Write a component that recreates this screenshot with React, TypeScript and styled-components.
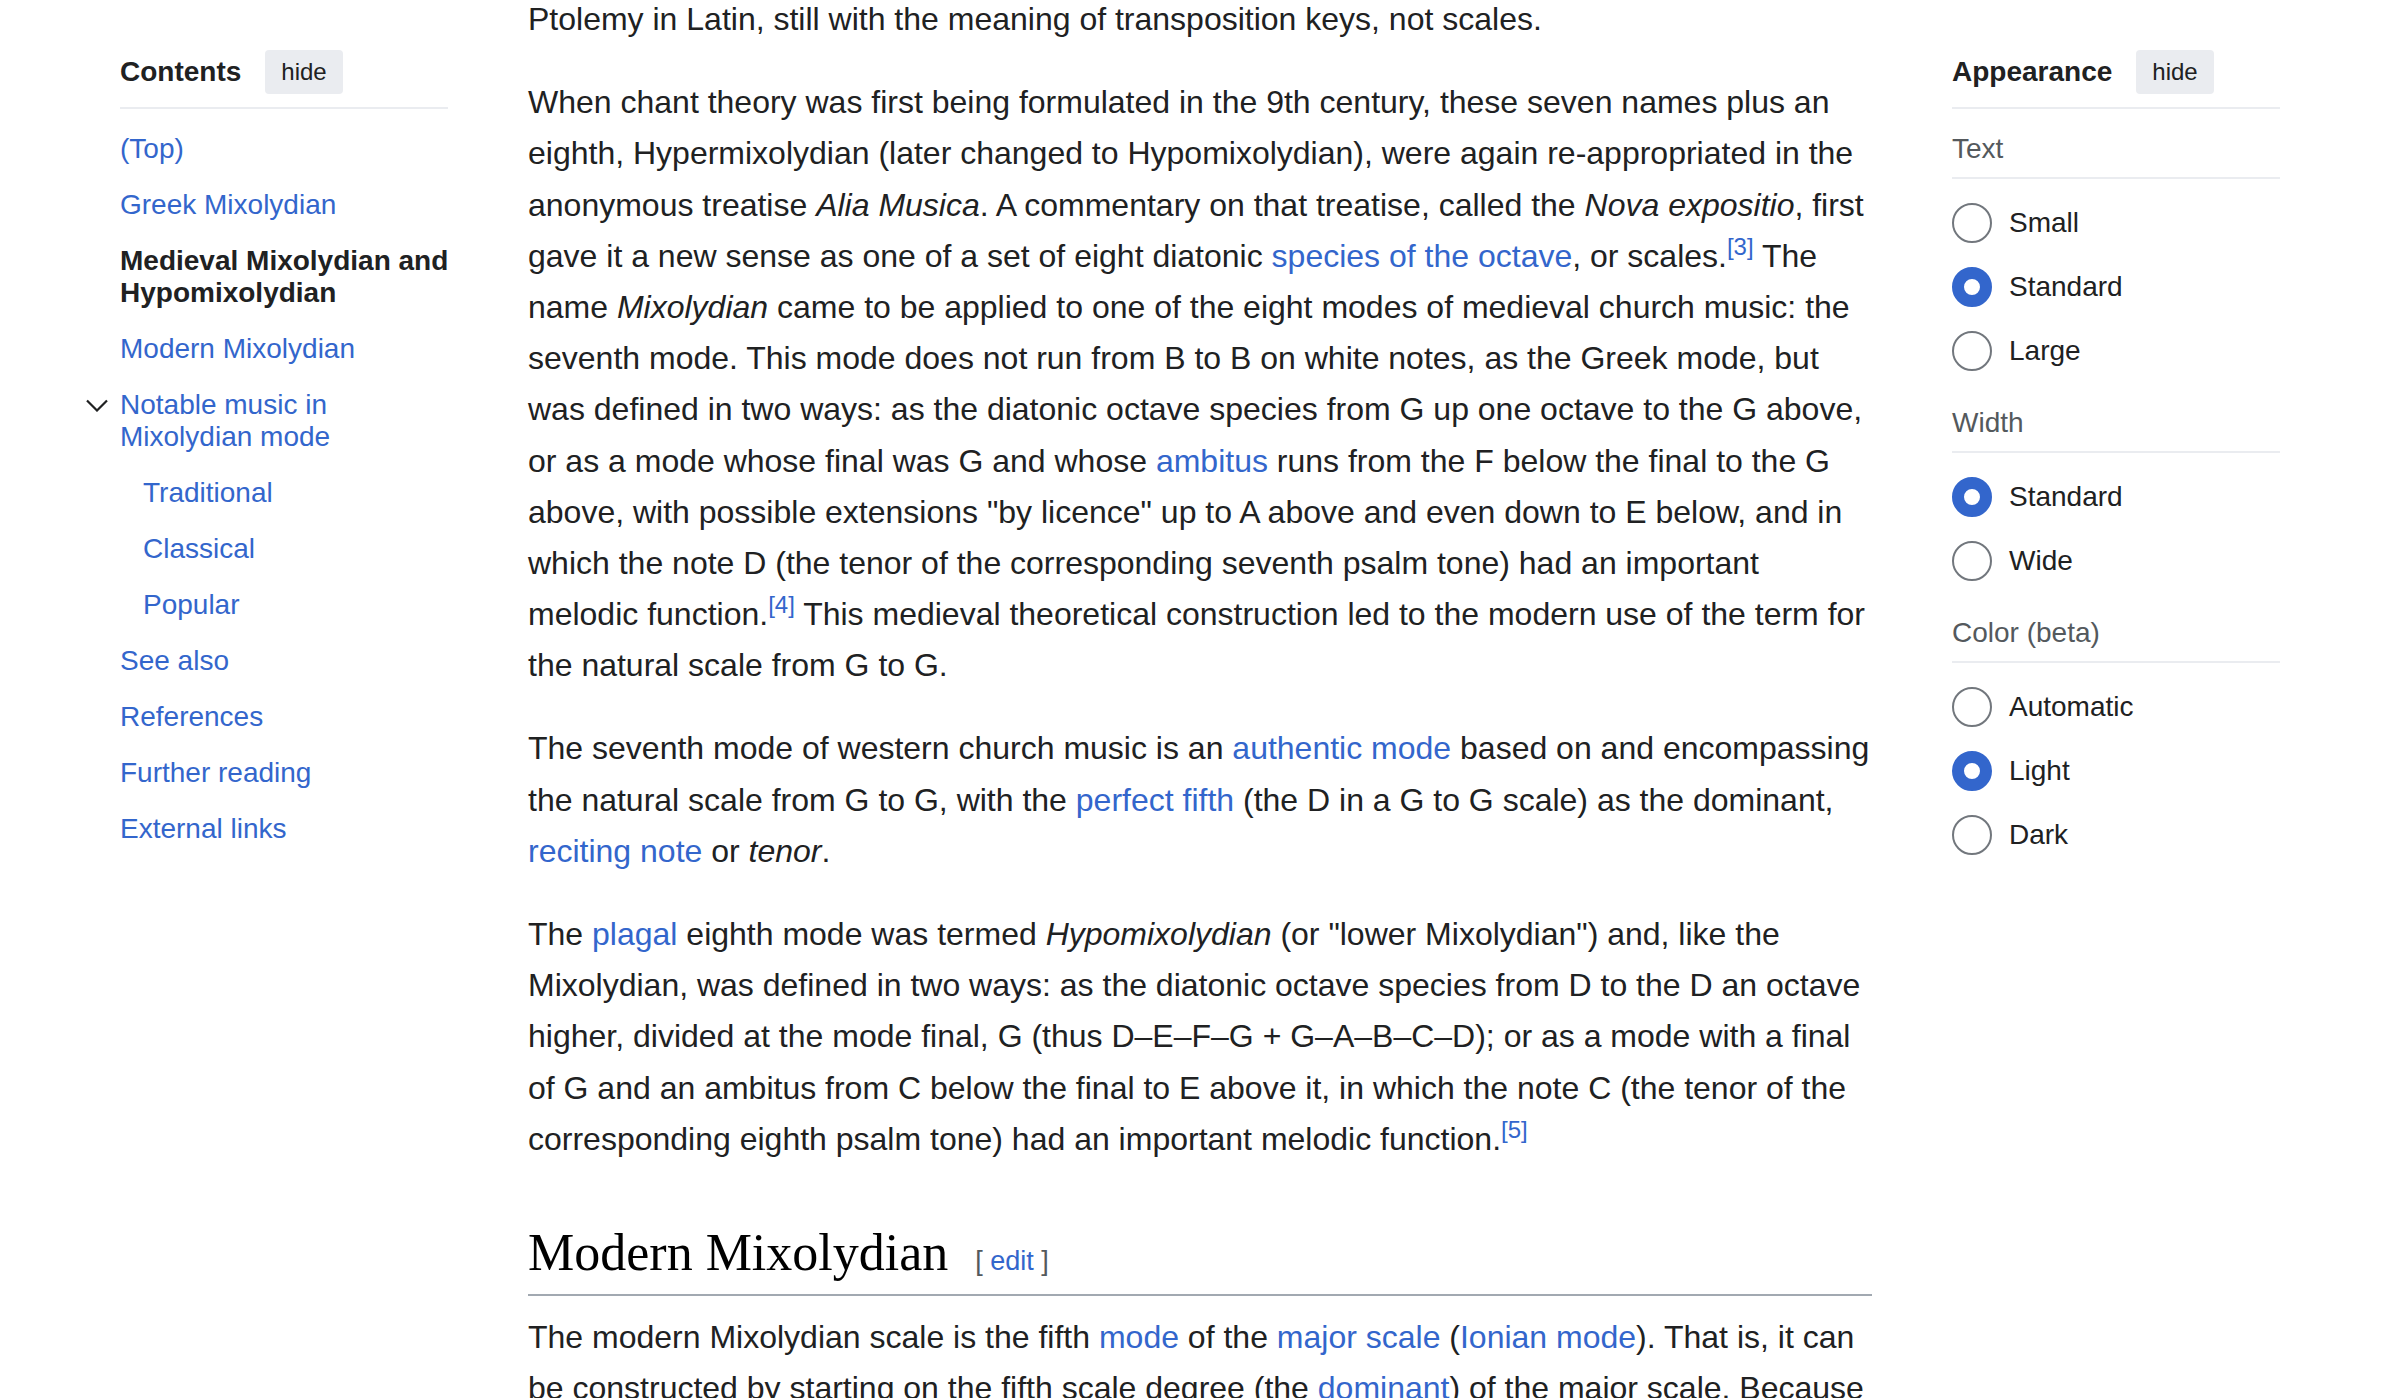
import React from "react";
import styled, { createGlobalStyle } from "styled-components";

const GlobalStyle = createGlobalStyle`
  html, body {
    margin: 0;
    padding: 0;
    background: #ffffff;
    overflow: hidden;
  }
  body {
    font-family: "Liberation Sans", Arial, Helvetica, sans-serif;
    color: #202122;
  }
`;

const Page = styled.div`
  display: grid;
  grid-template-columns: 328px 1344px 328px;
  column-gap: 80px;
  padding: 0 120px;
  height: 1398px;
  overflow: hidden;
  box-sizing: border-box;
  align-items: start;
`;

const SidePanel = styled.div`
  padding-top: 50px;
  font-size: 28px;
`;

const PanelHeader = styled.div`
  display: flex;
  align-items: center;
  gap: 24px;
  height: 44px;
  padding-bottom: 13px;
  border-bottom: 2px solid #eaecf0;
`;

const PanelTitle = styled.span`
  font-weight: 700;
  font-size: 28px;
  line-height: 32px;
  color: #202122;
`;

const HideButton = styled.button`
  height: 44px;
  padding: 0 16px;
  border: 0;
  border-radius: 4px;
  background: #eaecf0;
  color: #202122;
  font-family: "Liberation Sans", Arial, sans-serif;
  font-size: 24px;
  line-height: 44px;
  cursor: pointer;
`;

const TocList = styled.ul`
  list-style: none;
  margin: 0 -10px 0 0;
  padding: 12px 0 0;
`;

const TocItem = styled.li<{ $level?: number; $toggle?: boolean }>`
  display: flex;
  align-items: flex-start;
  padding: 12px 0;
  line-height: 32px;
  margin-left: ${(p) => (p.$toggle ? "-42px" : p.$level === 2 ? "23px" : "0")};
`;

const ToggleBox = styled.span`
  flex: none;
  width: 42px;
  height: 32px;
  display: flex;
  align-items: center;
  padding-left: 8px;
  box-sizing: border-box;
`;

const TocLink = styled.a<{ $active?: boolean }>`
  color: ${(p) => (p.$active ? "#202122" : "#3366cc")};
  font-weight: ${(p) => (p.$active ? 700 : 400)};
  text-decoration: none;
`;

const SectionLabel = styled.div`
  padding: 24px 0 12px;
  border-bottom: 2px solid #eaecf0;
  font-size: 28px;
  line-height: 32px;
  color: #54595d;
`;

const RadioList = styled.div`
  display: flex;
  flex-direction: column;
  gap: 24px;
  padding: 24px 0 12px;
`;

const RadioRow = styled.label`
  display: flex;
  align-items: center;
  gap: 17px;
  height: 40px;
  font-size: 28px;
  line-height: 32px;
  color: #202122;
`;

const RadioCircle = styled.span<{ $checked?: boolean }>`
  flex: none;
  width: 40px;
  height: 40px;
  box-sizing: border-box;
  border-radius: 50%;
  background: #ffffff;
  border: ${(p) => (p.$checked ? "12px solid #3366cc" : "2px solid #72777d")};
`;

const Main = styled.main`
  margin-top: -22px;
  font-size: 32px;
  line-height: 1.6;
  color: #202122;
`;

const Para = styled.p`
  margin: 16px 0 32px;
`;

const WikiLink = styled.a`
  color: #3366cc;
  text-decoration: none;
`;

const Ital = styled.i`
  font-style: italic;
`;

const Ref = styled.sup`
  font-size: 0.75em;
  line-height: 1;
  vertical-align: super;
  color: #3366cc;
`;

const Heading = styled.h2`
  font-family: "Liberation Serif", "Times New Roman", serif;
  font-weight: 400;
  font-size: 52px;
  line-height: 66px;
  color: #000000;
  margin: 55px 0 0;
  padding-bottom: 8px;
  border-bottom: 2px solid #a2a9b1;
`;

const EditSection = styled.span`
  font-family: "Liberation Sans", Arial, sans-serif;
  font-size: 27px;
  line-height: 1;
  margin-left: 27px;
  color: #54595d;
`;

const Chevron = () => (
  <svg width="22" height="13" viewBox="0 0 22 13" fill="none">
    <path d="M1 1.5 L11 11.5 L21 1.5" stroke="#202122" strokeWidth="2.2" />
  </svg>
);

type TocEntry = { label: string; level?: number; active?: boolean; toggle?: boolean };

const tocEntries: TocEntry[] = [
  { label: "(Top)" },
  { label: "Greek Mixolydian" },
  { label: "Medieval Mixolydian and Hypomixolydian", active: true },
  { label: "Modern Mixolydian" },
  { label: "Notable music in Mixolydian mode", toggle: true },
  { label: "Traditional", level: 2 },
  { label: "Classical", level: 2 },
  { label: "Popular", level: 2 },
  { label: "See also" },
  { label: "References" },
  { label: "Further reading" },
  { label: "External links" },
];

type RadioGroup = { label: string; options: string[]; checked: string };

const groups: RadioGroup[] = [
  { label: "Text", options: ["Small", "Standard", "Large"], checked: "Standard" },
  { label: "Width", options: ["Standard", "Wide"], checked: "Standard" },
  { label: "Color (beta)", options: ["Automatic", "Light", "Dark"], checked: "Light" },
];

export default function App() {
  return (
    <>
      <GlobalStyle />
      <Page>
        <SidePanel as="nav">
          <PanelHeader>
            <PanelTitle>Contents</PanelTitle>
            <HideButton>hide</HideButton>
          </PanelHeader>
          <TocList>
            {tocEntries.map((e) => (
              <TocItem key={e.label} $level={e.level} $toggle={e.toggle}>
                {e.toggle && (
                  <ToggleBox>
                    <Chevron />
                  </ToggleBox>
                )}
                <TocLink $active={e.active}>{e.label}</TocLink>
              </TocItem>
            ))}
          </TocList>
        </SidePanel>

        <Main>
          <Para>Ptolemy in Latin, still with the meaning of transposition keys, not scales.</Para>
          <Para>
            When chant theory was first being formulated in the 9th century, these seven names plus an
            eighth, Hypermixolydian (later changed to Hypomixolydian), were again re-appropriated in the
            anonymous treatise <Ital>Alia Musica</Ital>. A commentary on that treatise, called the{" "}
            <Ital>Nova expositio</Ital>, first gave it a new sense as one of a set of eight diatonic{" "}
            <WikiLink>species of the octave</WikiLink>, or scales.<Ref>[3]</Ref> The name{" "}
            <Ital>Mixolydian</Ital> came to be applied to one of the eight modes of medieval church music:
            the seventh mode. This mode does not run from B to B on white notes, as the Greek mode, but was
            defined in two ways: as the diatonic octave species from G up one octave to the G above, or as a
            mode whose final was G and whose <WikiLink>ambitus</WikiLink> runs from the F below the final to
            the G above, with possible extensions "by licence" up to A above and even down to E below, and in
            which the note D (the tenor of the corresponding seventh psalm tone) had an important melodic
            function.<Ref>[4]</Ref> This medieval theoretical construction led to the modern use of the term
            for the natural scale from G to G.
          </Para>
          <Para>
            The seventh mode of western church music is an <WikiLink>authentic mode</WikiLink> based on and
            encompassing the natural scale from G to G, with the <WikiLink>perfect fifth</WikiLink> (the D in
            a G to G scale) as the dominant, <WikiLink>reciting note</WikiLink> or <Ital>tenor</Ital>.
          </Para>
          <Para>
            The <WikiLink>plagal</WikiLink> eighth mode was termed <Ital>Hypomixolydian</Ital> (or "lower
            Mixolydian") and, like the Mixolydian, was defined in two ways: as the diatonic octave species
            from D to the D an octave higher, divided at the mode final, G (thus D–E–F–G + G–A–B–C–D); or as a
            mode with a final of G and an ambitus from C below the final to E above it, in which the note C
            (the tenor of the corresponding eighth psalm tone) had an important melodic function.
            <Ref>[5]</Ref>
          </Para>
          <Heading>
            Modern Mixolydian
            <EditSection>
              [ <WikiLink>edit</WikiLink> ]
            </EditSection>
          </Heading>
          <Para>
            The modern Mixolydian scale is the fifth <WikiLink>mode</WikiLink> of the{" "}
            <WikiLink>major scale</WikiLink> (<WikiLink>Ionian mode</WikiLink>). That is, it can be
            constructed by starting on the fifth scale degree (the <WikiLink>dominant</WikiLink>) of the
            major scale. Because of this, the Mixolydian mode is sometimes called the dominant scale.
          </Para>
        </Main>

        <SidePanel as="aside">
          <PanelHeader>
            <PanelTitle>Appearance</PanelTitle>
            <HideButton>hide</HideButton>
          </PanelHeader>
          {groups.map((g) => (
            <div key={g.label}>
              <SectionLabel>{g.label}</SectionLabel>
              <RadioList>
                {g.options.map((o) => (
                  <RadioRow key={o}>
                    <RadioCircle $checked={o === g.checked} />
                    {o}
                  </RadioRow>
                ))}
              </RadioList>
            </div>
          ))}
        </SidePanel>
      </Page>
    </>
  );
}
